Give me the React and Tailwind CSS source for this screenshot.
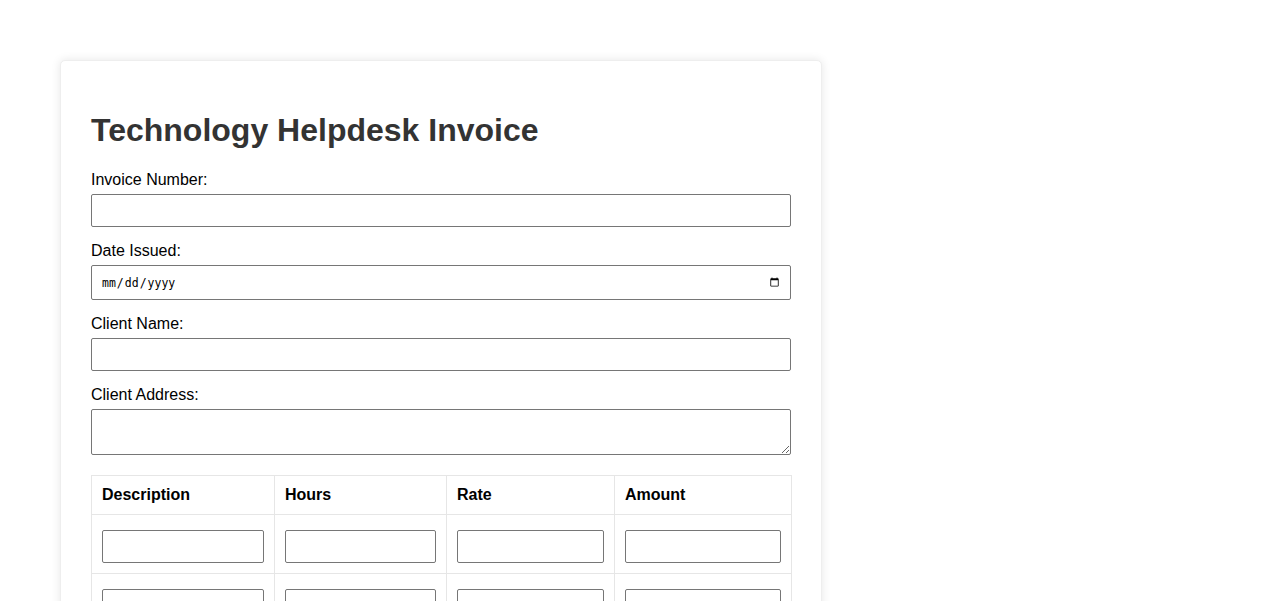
import React from "react";

const baseCls =
  "block w-full box-border border border-[#767676] rounded-[2px] bg-white px-[8px] py-[8px] leading-[normal] outline-none";
const inputCls = baseCls + " text-[13.33px]";

function Field({ label, children }) {
  return (
    <div>
      <label className="block mb-[5px] text-[16px] leading-[normal] text-black">{label}</label>
      {children}
    </div>
  );
}

export default function App() {
  const rows = [0, 1, 2];
  return (
    <div className="min-h-screen bg-white p-[60px] font-['Liberation_Sans',Arial,sans-serif]">
      <div className="w-[762px] box-border border border-[#eee] rounded-[5px] bg-white p-[30px] shadow-[0_0_10px_rgba(0,0,0,0.1)]">
        <h1 className="mt-[21px] mb-[22px] text-[32px] leading-[normal] font-bold text-[#333]">
          Technology Helpdesk Invoice
        </h1>
        <Field label="Invoice Number:">
          <input type="text" className={inputCls + " h-[33px] mb-[15px]"} />
        </Field>
        <Field label="Date Issued:">
          <input
            type="date"
            className={baseCls + " h-[35px] mb-[15px] pl-[9px] font-['DejaVu_Sans_Mono',monospace] text-[11.5px]"}
          />
        </Field>
        <Field label="Client Name:">
          <input type="text" className={inputCls + " h-[33px] mb-[15px]"} />
        </Field>
        <Field label="Client Address:">
          <textarea className={inputCls + " h-[46px] mb-[20px]"} />
        </Field>
        <table className="w-[700px] table-fixed border-collapse text-[16px] text-black">
          <colgroup>
            <col className="w-[183px]" />
            <col className="w-[172px]" />
            <col className="w-[168px]" />
            <col className="w-[177px]" />
          </colgroup>
          <thead>
            <tr>
              {["Description", "Hours", "Rate", "Amount"].map((h) => (
                <th
                  key={h}
                  className="border border-[#e6e6e6] p-[10px] text-left font-bold leading-[normal]"
                >
                  {h}
                </th>
              ))}
            </tr>
          </thead>
          <tbody>
            {rows.map((r) => (
              <tr key={r}>
                {[0, 1, 2, 3].map((c) => (
                  <td key={c} className="border border-[#e6e6e6] px-[10px] pt-[15px] pb-[10px] align-top">
                    <input type={c === 0 ? "text" : "number"} className={inputCls + " h-[33px]"} />
                  </td>
                ))}
              </tr>
            ))}
          </tbody>
        </table>
        <div className="mt-[20px] text-[16px] font-bold text-black">Total: $0.00</div>
      </div>
    </div>
  );
}
